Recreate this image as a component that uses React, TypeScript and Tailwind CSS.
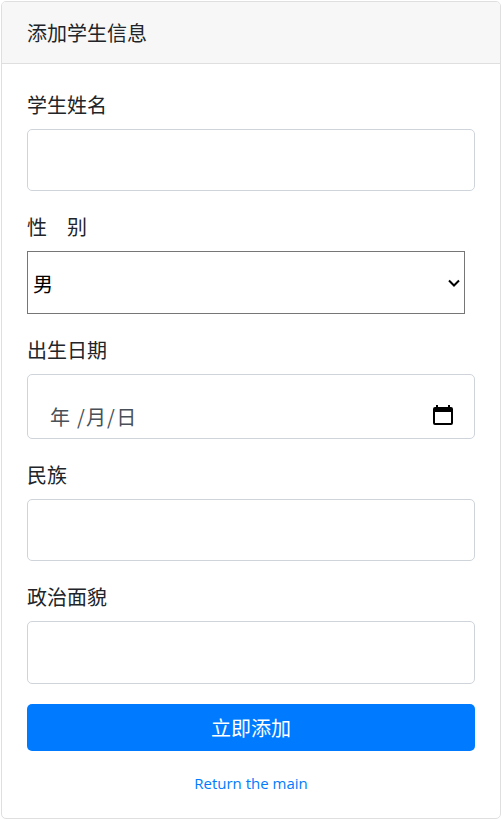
const FONT = "font-['Noto_Sans_CJK_SC','Liberation_Sans',sans-serif]";

function Field({ label, className }: { label: string; className: string }) {
	return (
		<div className={className}>
			<label className="mb-[9px] block h-[30px] text-[20px] leading-[30px] text-[#212529]">{label}</label>
			<input
				type="text"
				className="block h-[62px] w-full rounded-[5px] border border-[#ced4da] bg-white px-3 text-[20px] text-[#495057]"
			/>
		</div>
	);
}

export default function App() {
	return (
		<div className={`${FONT} h-[820px] bg-white px-px pt-px`}>
			<div className="flex h-[818px] w-[500px] flex-col overflow-hidden rounded-[5px] border border-[#dfdfdf] bg-white">
				<div className="flex h-[62px] shrink-0 items-center border-b border-[#dfdfdf] bg-[#f7f7f7] px-[25px] text-[20px] text-[#212529]">
					添加学生信息
				</div>
				<form className="flex flex-col px-[25px] pt-[26px]">
					<Field label="学生姓名" className="mb-[21px]" />

					<div className="mb-[21px]">
						<label className="mb-[9px] block h-[30px] text-[20px] leading-[30px] whitespace-pre text-[#212529]">
							性{"　"}别
						</label>
						<div className="relative h-[63px] w-[438px]">
							<select className="h-full w-full appearance-none rounded-none border border-[#767676] bg-white pt-[2px] pl-[5px] text-[20px] text-black">
								<option>男</option>
								<option>女</option>
							</select>
							<svg
								className="pointer-events-none absolute top-[26px] right-[5px] h-3 w-3"
								viewBox="0 0 12 12"
								fill="none"
								stroke="#000"
								strokeWidth="2"
							>
								<path d="M1 3.5 6 8.5 11 3.5" />
							</svg>
						</div>
					</div>

					<div className="mb-[21px]">
						<label className="mb-[9px] block h-[30px] text-[20px] leading-[30px] text-[#212529]">出生日期</label>
						<div className="relative flex h-[65px] items-center justify-between rounded-[5px] border border-[#ced4da] bg-white pt-[21px] pr-[21px] pl-[22px] text-[20px] text-[#495057]">
							<span className="tracking-[1.2px]">年 /月/日</span>
							<svg className="mb-[4px] h-[20px] w-[20px]" viewBox="0 0 20 20" aria-hidden="true">
								<path d="M5 0v2h10V0h2v2h1a2 2 0 0 1 2 2v14a2 2 0 0 1-2 2H2a2 2 0 0 1-2-2V4a2 2 0 0 1 2-2h1V0zM2 7v11h16V7z" fill="#000" />
							</svg>
						</div>
					</div>

					<Field label="民族" className="mb-[21px]" />

					<div className="mb-[20px]">
						<label className="mb-[9px] block h-[30px] text-[20px] leading-[30px] text-[#212529]">政治面貌</label>
						<input
							type="text"
							className="block h-[63px] w-full rounded-[5px] border border-[#ced4da] bg-white px-3 text-[20px] text-[#495057]"
						/>
					</div>

					<button
						type="button"
						className="h-[47px] w-full rounded-[5px] bg-[#007bff] text-[20px] text-white"
					>
						立即添加
					</button>
					<a className="mt-[22px] block text-center font-['Open_Sans','Liberation_Sans',sans-serif] text-[15px] leading-[21px] text-[#007bff]">
						Return the main
					</a>
				</form>
			</div>
		</div>
	);
}
